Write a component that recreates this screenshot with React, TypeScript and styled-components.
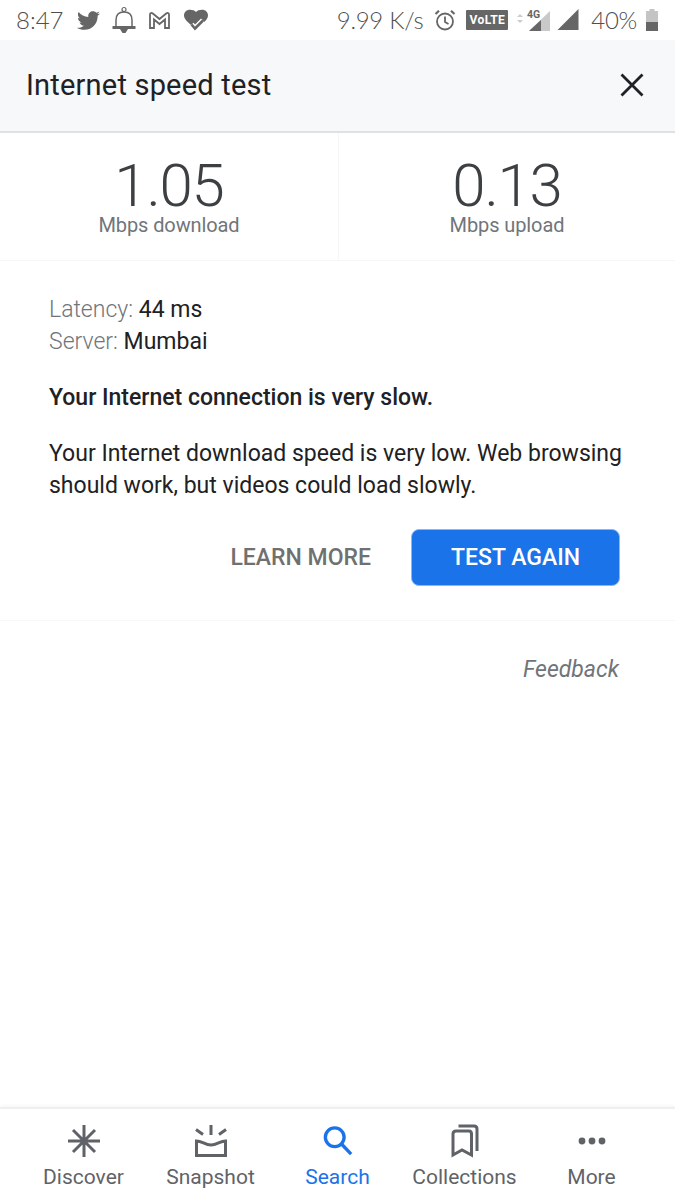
import React from "react";
import styled, { createGlobalStyle } from "styled-components";
import { FaTwitter } from "react-icons/fa";

const GlobalStyle = createGlobalStyle`
    html, body {
        margin: 0;
        padding: 0;
        background: #fff;
    }
    * {
        box-sizing: border-box;
    }
`;

const Page = styled.div`
    width: 675px;
    height: 1200px;
    display: flex;
    flex-direction: column;
    background: #fff;
    font-family: Roboto, "Liberation Sans", sans-serif;
    overflow: hidden;
`;

const StatusBar = styled.div`
    height: 40px;
    flex: none;
    display: flex;
    align-items: center;
    justify-content: space-between;
    padding: 0 17px 0 16px;
    color: #666;
`;

const StatusGroup = styled.div`
    display: flex;
    align-items: center;
`;

const Slot = styled.span<{ $left: number }>`
    display: flex;
    margin-left: ${(p) => p.$left}px;
`;

const StatusText = styled.span<{ $tight?: boolean }>`
    font-family: Lato, sans-serif;
    font-weight: 300;
    font-size: 24px;
    line-height: 40px;
    color: #4f4f4f;
    letter-spacing: ${(p) => (p.$tight ? "-0.3px" : "0")};
`;

const Header = styled.div`
    height: 93px;
    flex: none;
    display: flex;
    align-items: center;
    justify-content: space-between;
    padding: 0 31px 2px 26px;
    background: #f6f8fa;
    border-bottom: 2px solid #dfe1e5;
`;

const Title = styled.h1`
    margin: 0;
    font-size: 29px;
    font-weight: 400;
    color: #202124;
    letter-spacing: 0.2px;
`;

const CloseButton = styled.button`
    display: flex;
    padding: 0;
    border: none;
    background: none;
`;

const Stats = styled.div`
    height: 128px;
    flex: none;
    display: grid;
    grid-template-columns: 339px 1fr;
    border-bottom: 1px solid #f6f6f6;
`;

const Stat = styled.div`
    display: flex;
    flex-direction: column;
    align-items: center;
    padding-top: 26px;
    &:first-child {
        border-right: 1px solid #f6f6f6;
    }
`;

const StatValue = styled.div`
    font-size: 60px;
    line-height: 54px;
    font-weight: 300;
    color: #3c4043;
    letter-spacing: -1.2px;
`;

const StatLabel = styled.div`
    font-size: 20px;
    line-height: 24px;
    color: #70757a;
    letter-spacing: -0.1px;
`;

const Details = styled.div`
    padding: 33px 55px 34px 49px;
    border-bottom: 1px solid #f8f8f8;
`;

const InfoLine = styled.div`
    font-size: 23px;
    line-height: 32px;
    color: #202124;
`;

const InfoKey = styled.span`
    color: #70757a;
    font-weight: 300;
`;

const Verdict = styled.p`
    margin: 24px 0 0;
    font-size: 23px;
    line-height: 32px;
    font-weight: 500;
    color: #202124;
`;

const Description = styled.p`
    margin: 24px -6px 0 0;
    font-size: 23px;
    line-height: 32px;
    color: #202124;
`;

const Actions = styled.div`
    display: flex;
    justify-content: flex-end;
    align-items: center;
    gap: 40px;
    margin-top: 27px;
`;

const LearnMore = styled.span`
    font-size: 23px;
    font-weight: 500;
    color: #707070;
`;

const PrimaryButton = styled.button`
    width: 209px;
    height: 57px;
    border: 1px solid #8ab8f5;
    border-radius: 8px;
    background: #1a73e8;
    color: #fff;
    font-family: inherit;
    font-size: 23px;
    font-weight: 500;
`;

const FeedbackRow = styled.div`
    flex: 1;
    padding: 33px 56px 0 0;
    text-align: right;
    font-size: 23px;
    line-height: 32px;
    font-style: italic;
    color: #70757a;
`;

const BottomNav = styled.nav`
    height: 93px;
    flex: none;
    display: grid;
    grid-template-columns: repeat(5, 127px);
    padding: 14px 20px 0;
    border-top: 2px solid #efefef;
    box-shadow: 0 -2px 3px rgba(0, 0, 0, 0.03);
`;

const NavItem = styled.div<{ $active?: boolean }>`
    display: flex;
    flex-direction: column;
    align-items: center;
    color: ${(p) => (p.$active ? "#1a73e8" : "#5f6368")};
    font-size: 21px;
    line-height: 28px;
    white-space: nowrap;
`;

const NavIcon = styled.div`
    height: 36px;
    margin-bottom: 4px;
    display: flex;
    align-items: center;
    justify-content: center;
`;

const VolteBadge = styled.span`
    width: 42px;
    height: 20px;
    display: flex;
    align-items: center;
    justify-content: center;
    background: #666;
    border-radius: 1px;
    color: #fff;
    font-family: Roboto, sans-serif;
    font-size: 12px;
    font-weight: 700;
    letter-spacing: 0.4px;
`;

const Bell = () => (
    <svg width="24" height="28" viewBox="0 0 24 28" fill="none" stroke="#666" strokeWidth="1.500">
        <path d="M4 20V14C4 9 7 6 12 6C17 6 20 9 20 14V20" />
        <circle cx="12" cy="3.500" r="2" strokeWidth="1.200" />
        <path d="M0.500 21.500H23.500" strokeWidth="3" />
        <path d="M8 23H16L13.500 27H10.500Z" fill="#666" stroke="none" />
    </svg>
);

const GmailMark = () => (
    <svg width="21" height="17" viewBox="0 0 21 17" fill="none" stroke="#666" strokeWidth="1.800">
        <path d="M1 16V2.500C1 1 2.500 0.500 3.800 1.500L10.500 7L17.200 1.500C18.500 0.500 20 1 20 2.500V16H16V7.500L10.500 12L5 7.500V16Z" />
    </svg>
);

const HeartCheck = () => (
    <svg width="24" height="23" viewBox="0 0 24 23">
        <path d="M12 3C9 -0.500 0 -0.500 0 6.500C0 11 6 15 12 20C18 15 24 11 24 6.500C24 -0.500 15 -0.500 12 3Z" fill="#666" />
        <path d="M7.500 15.500L11 19.500L19 11.500" fill="none" stroke="#fff" strokeWidth="5.500" />
        <path d="M7.500 15.500L11 19.500L19 11.500" fill="none" stroke="#666" strokeWidth="2.600" />
    </svg>
);

const Alarm = () => (
    <svg width="22" height="22" viewBox="0 0 22 22" fill="none" stroke="#666" strokeWidth="1.800">
        <circle cx="11" cy="12.500" r="8" />
        <path d="M11 7.500V13L14.500 15" />
        <path d="M1.500 5L5 1.800M20.500 5L17 1.800" strokeWidth="2.200" />
    </svg>
);

const SignalWithData = () => (
    <svg width="34" height="24" viewBox="0 0 34 24">
        <path d="M0 9L3 6L6 9ZM0 12L3 15L6 12Z" fill="#ccc" />
        <text x="10" y="10" fontSize="10.500" fontWeight="700" fontFamily="Roboto, sans-serif" fill="#666">4G</text>
        <path d="M33 3V23H12Z" fill="#c9c9c9" />
        <path d="M24 12V23H12Z" fill="#666" />
    </svg>
);

const Signal = () => (
    <svg width="22" height="22" viewBox="0 0 22 22">
        <path d="M21.500 0V21H0.500Z" fill="#666" />
    </svg>
);

const Battery = () => (
    <svg width="12" height="22" viewBox="0 0 12 22">
        <path d="M3.500 0H8.500V2H12V22H0V2H3.500Z" fill="#c4c4c4" />
        <rect y="13" width="12" height="9" fill="#666" />
    </svg>
);

const CloseIcon = () => (
    <svg width="24" height="24" viewBox="0 0 24 24" fill="none" stroke="#202124" strokeWidth="2.800">
        <path d="M1.500 1.500L22.500 22.500M22.500 1.500L1.500 22.500" />
    </svg>
);

const DiscoverIcon = () => (
    <svg width="34" height="34" viewBox="0 0 34 34" stroke="#5f6368" strokeWidth="3" fill="none">
        <path d="M17 1V33M1 17H33M6 6L28 28M28 6L6 28" />
    </svg>
);

const SnapshotIcon = () => (
    <svg width="34" height="34" viewBox="0 0 34 34" fill="none" stroke="#5f6368" strokeWidth="3">
        <path d="M17 1V11M2 5.500L9 10.500M32 5.500L25 10.500" />
        <path d="M2.500 17C8 17 11 21 17 21C23 21 26 17 31.500 17V31.500H2.500Z" />
    </svg>
);

const SearchIcon = () => (
    <svg width="30" height="32" viewBox="0 0 32 34" fill="none" stroke="#1a73e8" strokeWidth="3.600">
        <circle cx="12.500" cy="13" r="10" />
        <path d="M20 20.500L30 31" />
    </svg>
);

const CollectionsIcon = () => (
    <svg width="28" height="34" viewBox="0 0 28 34" fill="none" stroke="#5f6368" strokeWidth="3">
        <path d="M2 10C2 8 3 7 5 7H18C20 7 20.500 8 20.500 10V31L11 26L2 31Z" />
        <path d="M7.500 2H23C25 2 26 3 26 5V27" />
    </svg>
);

const MoreIcon = () => (
    <svg width="28" height="8" viewBox="0 0 28 8" fill="#5f6368">
        <circle cx="4" cy="4" r="3.400" />
        <circle cx="14" cy="4" r="3.400" />
        <circle cx="24" cy="4" r="3.400" />
    </svg>
);

const navItems = [
    { label: "Discover", icon: <DiscoverIcon /> },
    { label: "Snapshot", icon: <SnapshotIcon /> },
    { label: "Search", icon: <SearchIcon />, active: true },
    { label: "Collections", icon: <CollectionsIcon /> },
    { label: "More", icon: <MoreIcon /> },
];

export default function App() {
    return (
        <Page>
            <GlobalStyle />
            <StatusBar>
                <StatusGroup>
                    <StatusText>8:47</StatusText>
                    <Slot $left={13}><FaTwitter size={23} color="#666" /></Slot>
                    <Slot $left={12}><Bell /></Slot>
                    <Slot $left={13}><GmailMark /></Slot>
                    <Slot $left={14}><HeartCheck /></Slot>
                </StatusGroup>
                <StatusGroup>
                    <StatusText $tight>9.99 K/s</StatusText>
                    <Slot $left={11}><Alarm /></Slot>
                    <Slot $left={10}><VolteBadge>VoLTE</VolteBadge></Slot>
                    <Slot $left={9}><SignalWithData /></Slot>
                    <Slot $left={6}><Signal /></Slot>
                    <Slot $left={12}><StatusText $tight>40%</StatusText></Slot>
                    <Slot $left={9}><Battery /></Slot>
                </StatusGroup>
            </StatusBar>
            <Header>
                <Title>Internet speed test</Title>
                <CloseButton>
                    <CloseIcon />
                </CloseButton>
            </Header>
            <Stats>
                <Stat>
                    <StatValue>1.05</StatValue>
                    <StatLabel>Mbps download</StatLabel>
                </Stat>
                <Stat>
                    <StatValue>0.13</StatValue>
                    <StatLabel>Mbps upload</StatLabel>
                </Stat>
            </Stats>
            <Details>
                <InfoLine>
                    <InfoKey>Latency:</InfoKey> 44 ms
                </InfoLine>
                <InfoLine>
                    <InfoKey>Server:</InfoKey> Mumbai
                </InfoLine>
                <Verdict>Your Internet connection is very slow.</Verdict>
                <Description>
                    Your Internet download speed is very low. Web browsing should work, but videos could load slowly.
                </Description>
                <Actions>
                    <LearnMore>LEARN MORE</LearnMore>
                    <PrimaryButton>TEST AGAIN</PrimaryButton>
                </Actions>
            </Details>
            <FeedbackRow>Feedback</FeedbackRow>
            <BottomNav>
                {navItems.map((item) => (
                    <NavItem key={item.label} $active={item.active}>
                        <NavIcon>{item.icon}</NavIcon>
                        {item.label}
                    </NavItem>
                ))}
            </BottomNav>
        </Page>
    );
}
